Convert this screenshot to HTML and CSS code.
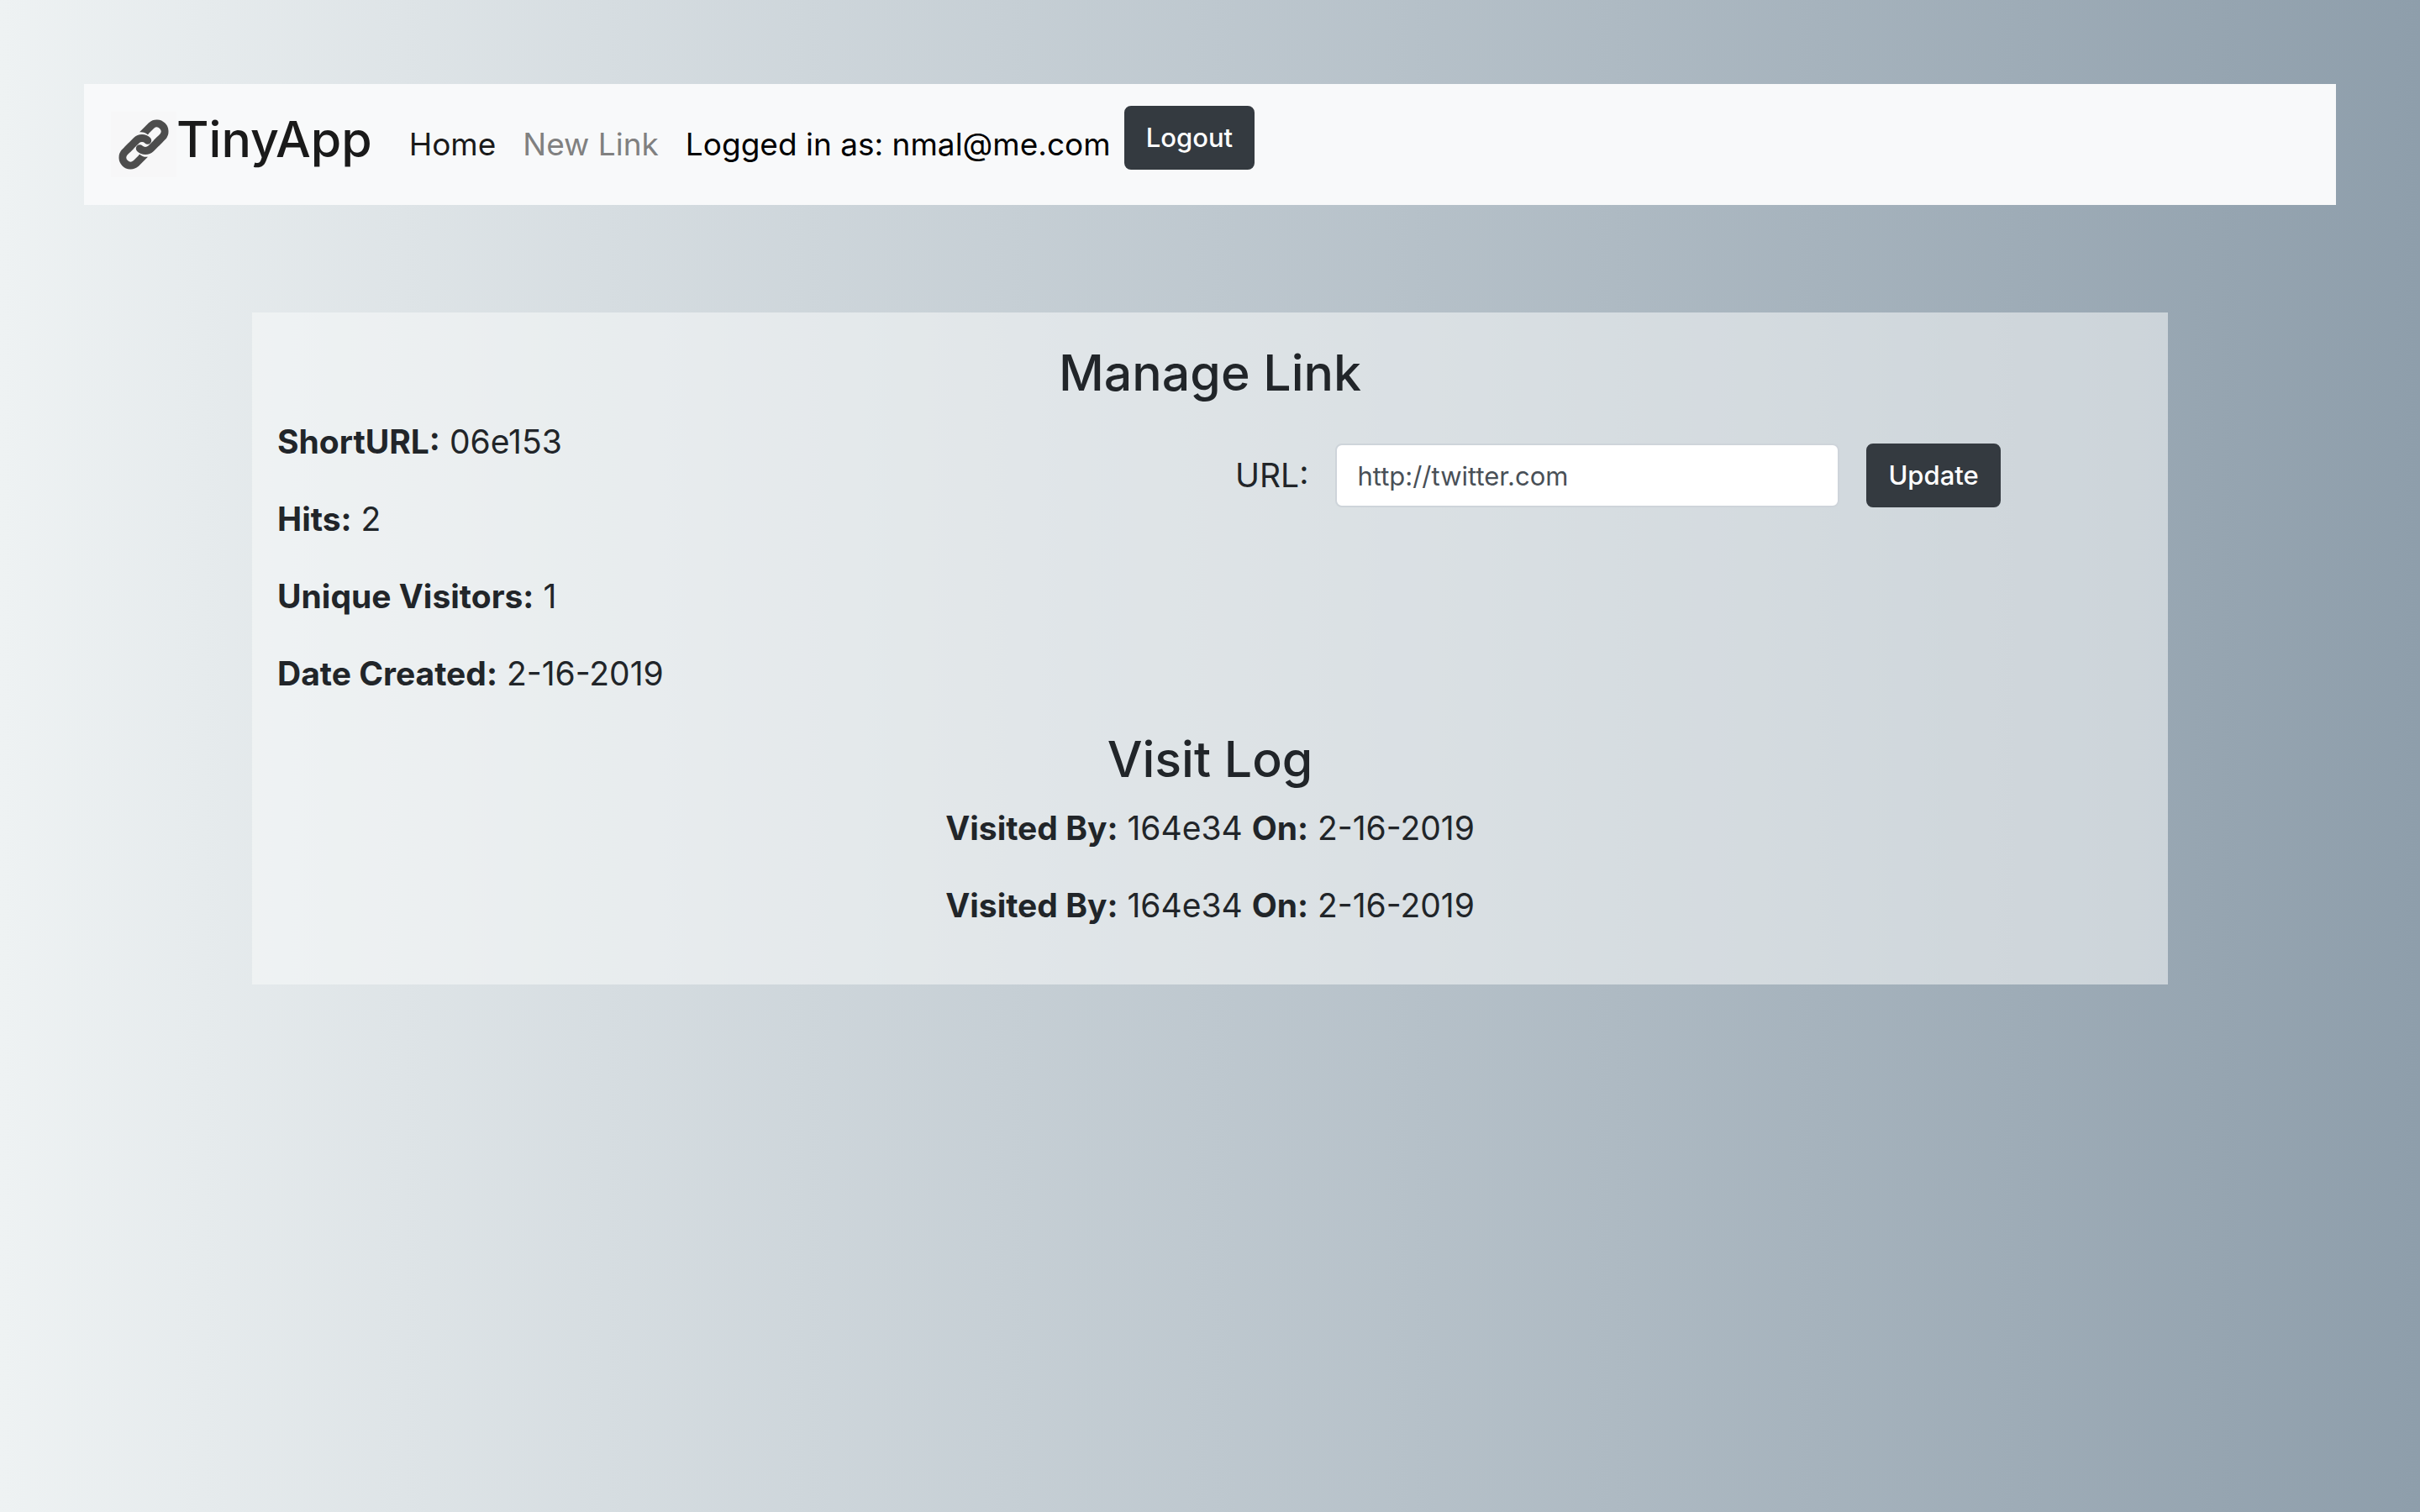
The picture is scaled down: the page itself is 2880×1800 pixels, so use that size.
FILE: index.html
```html
<!DOCTYPE html>
<html lang="en">
<head>
  <meta charset="utf-8">
  <title>TinyApp</title>
  <link rel="stylesheet" href="styles.css">
</head>
<body>
  <nav class="navbar">
    <a class="brand" href="#">
      <svg class="brand-icon" viewBox="0 0 78 78" aria-hidden="true">
        <defs>
          <g id="half" fill="none" stroke="#4d4d4d" stroke-width="9">
            <path d="M41 23.6L48.3 16.3A9.5 9.5 0 0 1 61.7 29.7L54 37.4"/>
            <path d="M58 33.4L47.7 43.7A9.5 9.5 0 0 1 34.3 43.7" stroke-linecap="round"/>
            <path d="M38.3 19.9L34 24.3Q40 23.6 43.7 27.3L45 26Z" fill="#4d4d4d" stroke="none"/>
          </g>
        </defs>
        <rect width="78" height="78" fill="#f7f7f8"/>
        <use href="#half"/>
        <use href="#half" transform="rotate(180 39 39)"/>
      </svg>
      <span class="brand-name">TinyApp</span>
    </a>
    <ul class="nav-links">
      <li><a class="nav-link active" href="#">Home</a></li>
      <li><a class="nav-link" href="#">New Link</a></li>
    </ul>
    <span class="user">Logged in as: nmal@me.com</span>
    <form class="logout"><button class="btn" type="button">Logout</button></form>
  </nav>

  <main class="card">
    <h2>Manage Link</h2>
    <div class="row">
      <section class="col">
        <p><b>ShortURL:</b> 06e153</p>
        <p><b>Hits:</b> 2</p>
        <p><b>Unique Visitors:</b> 1</p>
        <p><b>Date Created:</b> 2-16-2019</p>
      </section>
      <form class="col url-form">
        <label for="url">URL:</label>
        <input id="url" type="text" value="http://twitter.com">
        <button class="btn" type="button">Update</button>
      </form>
    </div>
    <section class="log">
      <h2>Visit Log</h2>
      <p><b>Visited By:</b> 164e34 <b>On:</b> 2-16-2019</p>
      <p><b>Visited By:</b> 164e34 <b>On:</b> 2-16-2019</p>
    </section>
  </main>
</body>
</html>
```
FILE: styles.css
```css
* {
  box-sizing: border-box;
}

body {
  margin: 0;
  min-height: 100vh;
  padding: 100px;
  background: linear-gradient(to right, #eef2f3, #8e9eab);
  color: #212529;
  font-family: Inter, "Liberation Sans", sans-serif;
  font-size: 39px;
  line-height: 60px;
}

h2 {
  margin: 0 0 12px;
  font-size: 59px;
  font-weight: 500;
  line-height: 80px;
  text-align: center;
}

p {
  margin: 0 0 32px;
}

b {
  font-weight: 700;
}

.navbar {
  display: flex;
  align-items: center;
  min-height: 144px;
  padding: 16px 32px;
  background: #f8f9fa;
  font-size: 37px;
}

.brand {
  display: flex;
  align-items: center;
  margin-right: 28px;
  color: #1a1a1a;
  text-decoration: none;
}

.brand-icon {
  width: 78px;
  height: 78px;
}

.brand-name {
  padding-bottom: 12px;
  font-size: 59px;
  font-weight: 500;
  line-height: 76px;
}

.nav-links {
  display: flex;
  margin: 0;
  padding: 0;
  list-style: none;
}

.nav-link {
  display: block;
  padding: 16px;
  color: #808080;
  text-decoration: none;
}

.nav-link.active {
  color: #1a1a1a;
}

.user {
  padding: 0 16px;
  color: #000;
}

.logout {
  display: flex;
  padding-bottom: 16px;
}

.btn {
  height: 76px;
  padding: 12px 24px;
  border: 2px solid #343a40;
  border-radius: 8px;
  background: #343a40;
  color: #fff;
  font: inherit;
  font-size: 31px;
  font-weight: 500;
  line-height: 48px;
}

.card {
  margin: 128px 200px 0;
  padding: 32px 0;
  background: rgba(248, 249, 250, 0.55);
}

.row {
  display: grid;
  grid-template-columns: 1fr 1fr;
}

.col {
  padding: 0 30px;
}

.url-form {
  display: flex;
  align-items: center;
  align-self: start;
  gap: 32px;
  padding-top: 32px;
}

.url-form input {
  flex: 0 1 600px;
  min-width: 0;
  height: 76px;
  padding: 12px 24px;
  border: 2px solid #ced4da;
  border-radius: 8px;
  background: #fff;
  color: #495057;
  font: inherit;
  font-size: 31px;
}

.log {
  text-align: center;
}
```
